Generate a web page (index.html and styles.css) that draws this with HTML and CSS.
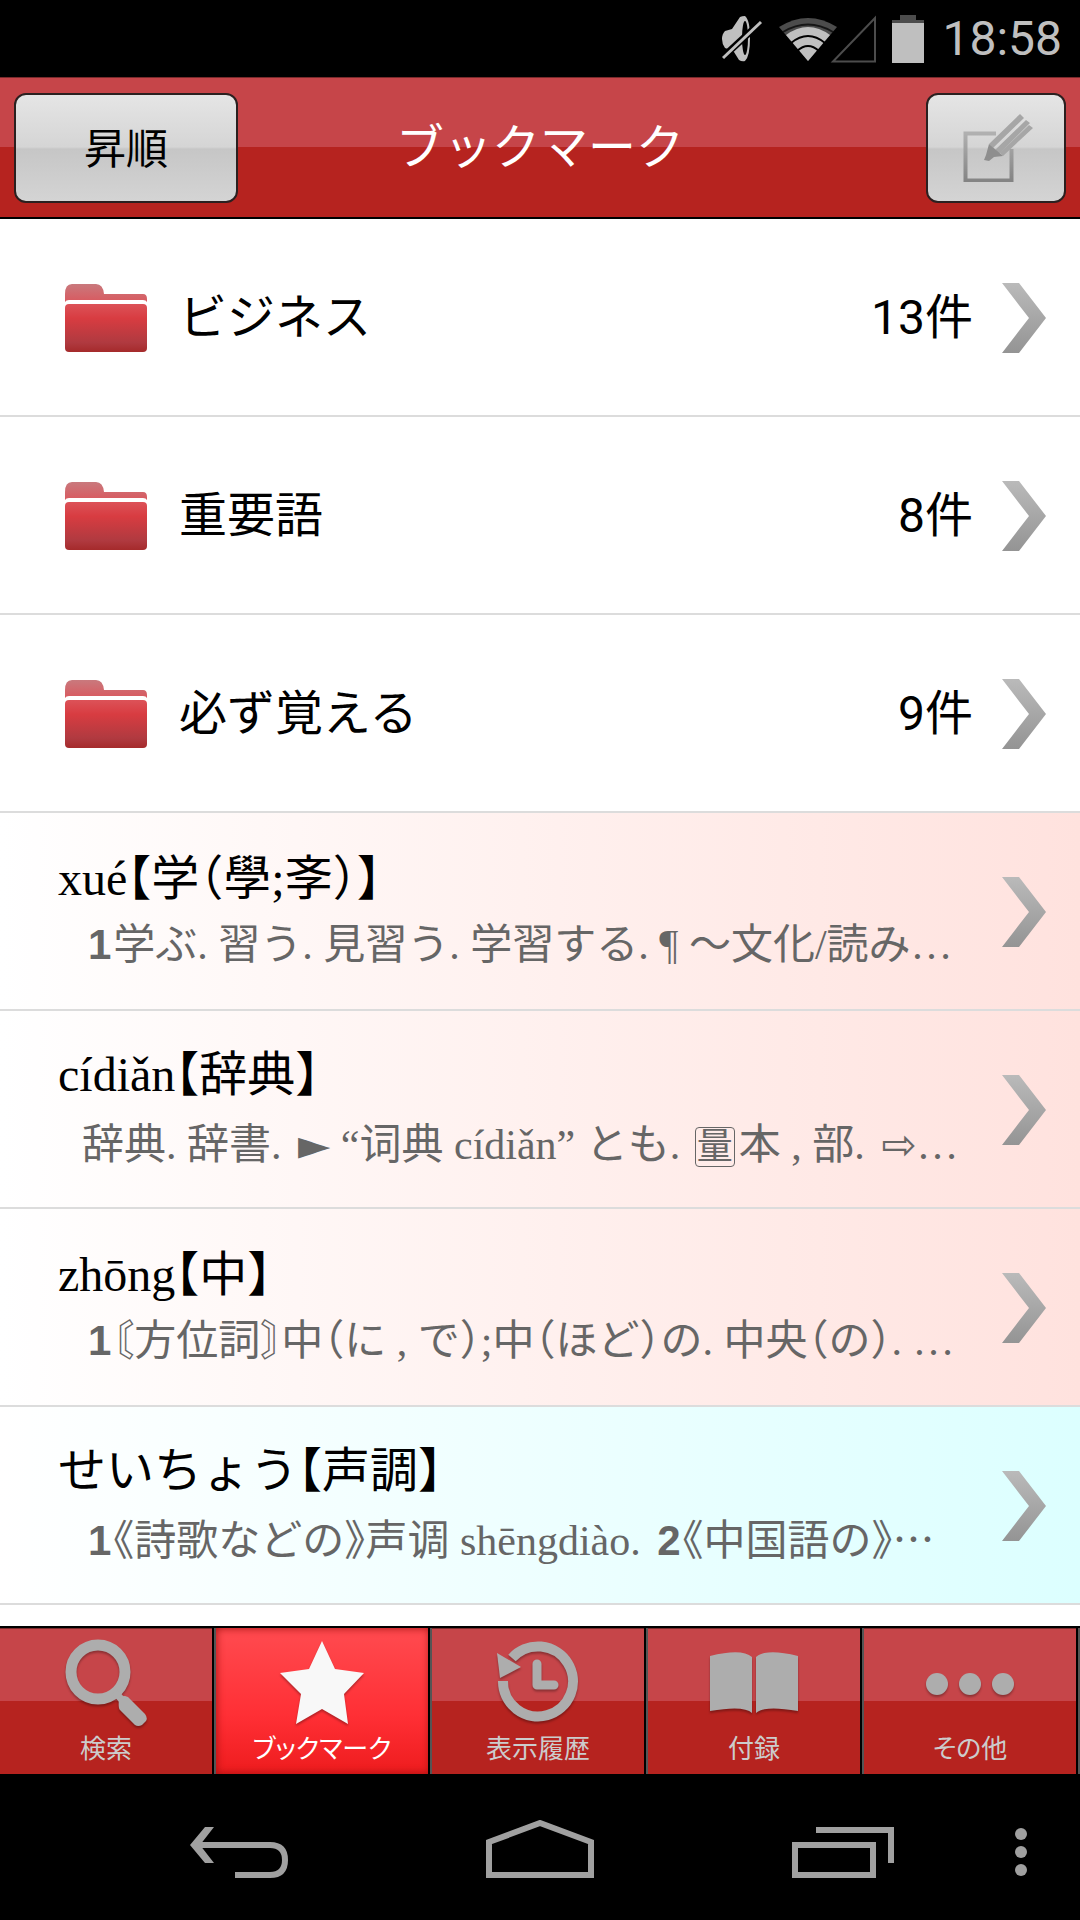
FILE: index.html
```html
<!DOCTYPE html>
<html lang="ja">
<head>
    <meta charset="UTF-8">
    <meta name="viewport" content="width=device-width, initial-scale=1.0">
    <title>ブックマーク</title>
    <link rel="stylesheet" href="styles.css">
</head>
<body>
    <!-- shared icons -->
    <svg class="defs" width="0" height="0" aria-hidden="true">
        <defs>
            <linearGradient id="arrowFill" x1="0" y1="0" x2="0" y2="1">
                <stop offset="0" stop-color="#bababa"/>
                <stop offset="1" stop-color="#949494"/>
            </linearGradient>
            <linearGradient id="folderBack" x1="0" y1="0" x2="0" y2="1">
                <stop offset="0" stop-color="#c9797d"/>
                <stop offset="1" stop-color="#d9595f"/>
            </linearGradient>
            <linearGradient id="folderFront" x1="0" y1="0" x2="0" y2="1">
                <stop offset="0" stop-color="#dc5258"/>
                <stop offset="0.3" stop-color="#d83c41"/>
                <stop offset="0.8" stop-color="#b03a40"/>
                <stop offset="1" stop-color="#a52a2b"/>
            </linearGradient>
            <linearGradient id="editFill" x1="0" y1="0" x2="0" y2="1">
                <stop offset="0" stop-color="#b0b0b0"/>
                <stop offset="1" stop-color="#848484"/>
            </linearGradient>
        </defs>
        <symbol id="arrow" viewBox="0 0 44 70">
            <path d="M0 0h17l27 35-27 35H0l27-35z" fill="url(#arrowFill)"/>
        </symbol>
        <symbol id="folder" viewBox="0 0 82 68">
            <path d="M0 18V10Q0 0 7 0h24q7 0 8 10h39q4 0 4 5v3q-1-2-4-2H4q-3 0-4 2z" fill="url(#folderBack)"/>
            <rect y="20" width="82" height="48" rx="4" fill="url(#folderFront)"/>
        </symbol>
    </svg>

    <div class="statusbar">
        <svg width="42" height="46" viewBox="0 0 42 46">
            <path d="M18 1q2-1 5-1 5 4 5 22t-5 23q-3 1-6-1l-5-8q-5-3-9-4-3-4-3-9t3-8l7-2z" fill="#bfbfbf"/>
            <ellipse cx="23" cy="22" rx="3" ry="17" fill="#000"/>
            <path d="M1 41L39 6" stroke="#000" stroke-width="7"/>
            <path d="M1 42L39 6" stroke="#bfbfbf" stroke-width="3"/>
        </svg>
        <svg width="98" height="48" viewBox="0 0 98 48">
            <path d="M29 46L0 12Q29-6 58 12z" fill="#4c4c4c"/>
            <path d="M29 46L7 20Q29 4 51 20z" fill="#bfbfbf"/>
            <path d="M12 28Q29 14 46 28M18 36Q29 26 40 36" fill="none" stroke="#000" stroke-width="2"/>
            <path d="M4 17Q29 2 54 17" fill="none" stroke="#000" stroke-width="2" opacity="0.7"/>
            <path d="M54 46.500H96V3z" fill="none" stroke="#4c4c4c" stroke-width="2"/>
        </svg>
        <svg width="32" height="48" viewBox="0 0 32 48">
            <path d="M0 10V5h8V0h16v5h8v5z" fill="#4c4c4c"/>
            <path d="M0 8h32v40H0z" fill="#bfbfbf"/>
        </svg>
        <span class="clock">18:58</span>
    </div>

    <header class="header">
        <button type="button" class="btn btn-sort">昇順</button>
        <h1>ブックマーク</h1>
        <button type="button" class="btn btn-edit" aria-label="編集">
            <svg width="74" height="68" viewBox="-4 0 74 68">
                <path d="M33 19.500H2.500V66.500H48.500V35" fill="none" stroke="url(#editFill)" stroke-width="4"/>
                <path d="M57 0l4 4-31 30-4-4zM63 6l4 3-31 31-4-4zM66 11l4 3-30 28-3-3z" fill="#a6a6a6"/>
                <path d="M26 30l14 12-9 1-5 4-5-1 2-5z" fill="#8e8e8e"/>
            </svg>
        </button>
    </header>

    <ul class="list">
        <li>
            <a href="#" class="row folder">
                <svg class="folder-icon"><use href="#folder"/></svg>
                <span class="folder-name">ビジネス</span>
                <span class="count">13件</span>
                <svg class="arrow"><use href="#arrow"/></svg>
            </a>
        </li>
        <li>
            <a href="#" class="row folder">
                <svg class="folder-icon"><use href="#folder"/></svg>
                <span class="folder-name">重要語</span>
                <span class="count">8件</span>
                <svg class="arrow"><use href="#arrow"/></svg>
            </a>
        </li>
        <li>
            <a href="#" class="row folder">
                <svg class="folder-icon"><use href="#folder"/></svg>
                <span class="folder-name">必ず覚える</span>
                <span class="count">9件</span>
                <svg class="arrow"><use href="#arrow"/></svg>
            </a>
        </li>
        <li>
            <a href="#" class="row word zh">
                <span class="entry">
                    <span class="headword">xué【学（學;斈）】</span>
                    <span class="meaning"><b>1</b>学ぶ. 習う. 見習う. 学習する. ¶ ～文化/読み…</span>
                </span>
                <svg class="arrow"><use href="#arrow"/></svg>
            </a>
        </li>
        <li>
            <a href="#" class="row word zh">
                <span class="entry">
                    <span class="headword">cídiǎn【辞典】</span>
                    <span class="meaning">辞典. 辞書. <span class="sym">►</span> “<span lang="zh-CN">词典</span> cídiǎn” とも. <span class="boxed">量</span>本 , 部. <span class="sym">⇨</span>…</span>
                </span>
                <svg class="arrow"><use href="#arrow"/></svg>
            </a>
        </li>
        <li>
            <a href="#" class="row word zh">
                <span class="entry">
                    <span class="headword">zhōng【中】</span>
                    <span class="meaning"><b>1</b>〘方位詞〙中（に , で）;中（ほど）の. 中央（の）. …</span>
                </span>
                <svg class="arrow"><use href="#arrow"/></svg>
            </a>
        </li>
        <li>
            <a href="#" class="row word ja">
                <span class="entry">
                    <span class="headword">せいちょう【声調】</span>
                    <span class="meaning"><b>1</b>《詩歌などの》<span lang="zh-CN">声调</span> shēngdiào. <b>2</b>《中国語の》<span class="mid">…</span></span>
                </span>
                <svg class="arrow"><use href="#arrow"/></svg>
            </a>
        </li>
    </ul>

    <nav class="tabs">
        <a href="#" class="tab">
            <svg viewBox="0 0 88 88">
                <circle cx="36" cy="34" r="27" fill="none" stroke="#adadad" stroke-width="11"/>
                <path d="M53 54l7 8" stroke="#adadad" stroke-width="7"/>
                <path d="M57 61q0-3 6-3l3 1 17 17q3 4 1 7l-4 4q-4 2-7 0L58 72q-2-2-1-11z" fill="#adadad"/>
            </svg>
            検索
        </a>
        <a href="#" class="tab active">
            <svg viewBox="0 0 88 88">
                <path d="M44 3l13 28 29 4-20 21 4 30-26-15-26 15 5-30L2 35l29-4z" fill="#f8f8f8"/>
            </svg>
            ブックマーク
        </a>
        <a href="#" class="tab">
            <svg viewBox="0 0 88 88">
                <path d="M18 20A35 35 0 1 1 9 43" fill="none" stroke="#adadad" stroke-width="10"/>
                <path d="M3 15l24 14L6 40z" fill="#adadad"/>
                <path d="M43 26v21h17" fill="none" stroke="#adadad" stroke-width="9" stroke-linecap="round" stroke-linejoin="round"/>
            </svg>
            表示履歴
        </a>
        <a href="#" class="tab">
            <svg viewBox="0 0 88 88">
                <path d="M0 18q32-8 42 1v56q-8-8-42-2zM88 18q-32-8-42 1v56q8-8 42-2z" fill="#adadad"/>
            </svg>
            付録
        </a>
        <a href="#" class="tab">
            <svg viewBox="0 0 88 88">
                <g fill="#adadad">
                    <circle cx="11" cy="46" r="11"/>
                    <circle cx="44" cy="46" r="11"/>
                    <circle cx="77" cy="46" r="11"/>
                </g>
            </svg>
            その他
        </a>
    </nav>

    <div class="navbar">
        <button type="button" aria-label="戻る">
            <svg width="100" height="58" viewBox="0 0 100 58">
                <path d="M6 25H80Q95 25 95 40T80 55H45" fill="none" stroke="#a0a0a0" stroke-width="6"/>
                <path d="M0 25L15 7h9L10 25l14 18h-9z" fill="#a0a0a0"/>
            </svg>
        </button>
        <button type="button" aria-label="ホーム">
            <svg width="108" height="58" viewBox="0 0 108 58">
                <path d="M3 22L54 3l51 19v33H3z" fill="none" stroke="#a0a0a0" stroke-width="6"/>
            </svg>
        </button>
        <button type="button" aria-label="最近使ったアプリ">
            <svg width="108" height="58" viewBox="-6 0 108 58">
                <path d="M3 25h78v30H3zM24 10h75v33" fill="none" stroke="#a0a0a0" stroke-width="6"/>
            </svg>
        </button>
        <button type="button" aria-label="メニュー">
            <svg width="14" height="58" viewBox="0 0 14 58">
                <g fill="#a0a0a0">
                    <circle cx="7" cy="14" r="6"/>
                    <circle cx="7" cy="32" r="6"/>
                    <circle cx="7" cy="50" r="6"/>
                </g>
            </svg>
        </button>
    </div>
</body>
</html>
```
FILE: styles.css
```css
* {
    box-sizing: border-box;
}
body {
    margin: 0;
    height: 100vh;
    display: flex;
    flex-direction: column;
    background-color: #000;
    font-family: Roboto, "Noto Sans CJK JP", sans-serif;
}
a {
    color: inherit;
    text-decoration: none;
}
.defs {
    position: absolute;
}

/* status bar */
.statusbar {
    display: flex;
    justify-content: flex-end;
    align-items: center;
    height: 77px;
    padding: 0 18px;
    color: #bfbfbf;
}
.statusbar svg + svg {
    margin-left: 15px;
}
.clock {
    margin-left: 18px;
    font-size: 48px;
    line-height: 77px;
}

/* header */
.header {
    display: grid;
    grid-template-columns: 1fr auto 1fr;
    align-items: center;
    height: 142px;
    padding: 0 14px;
    border-top: 1px solid #7a2a2c;
    border-bottom: 2px solid #000;
    background: linear-gradient(#c64549 50%, #b6231f 50%);
}
.header h1 {
    margin: 0;
    color: #fff;
    font-size: 48px;
    font-weight: 400;
    line-height: 66px;
}
.btn {
    display: flex;
    justify-content: center;
    align-items: center;
    height: 110px;
    padding: 0 0 4px;
    border: 2px solid #2b2020;
    border-radius: 12px;
    background: linear-gradient(#e5e5e5, #d5d5d5 49%, #c6c6c6 51%, #d4d4d4);
    color: #000;
    font-family: inherit;
    font-size: 42px;
}
.btn-sort {
    width: 224px;
}
.btn-edit {
    justify-self: end;
    width: 140px;
    padding: 0;
}

/* list */
.list {
    flex: 1;
    min-height: 0;
    margin: 0;
    padding: 0;
    overflow: hidden;
    list-style: none;
    background-color: #fff;
}
.row {
    display: flex;
    align-items: center;
    height: 198px;
    padding-top: 2px;
    padding-right: 34px;
    border-bottom: 2px solid #dcdcdc;
    color: #000;
    font-size: 48px;
    line-height: 66px;
}
.arrow {
    flex: none;
    width: 44px;
    height: 70px;
}
.folder {
    padding-left: 65px;
}
.folder-icon {
    width: 82px;
    height: 68px;
}
.folder-name {
    flex: 1;
    margin-left: 32px;
}
.count {
    margin-right: 29px;
}
.word {
    padding-left: 58px;
    font-family: "Liberation Serif", "Noto Sans CJK JP", serif;
    font-feature-settings: "halt";
}
.zh {
    background: linear-gradient(to right, #fff, #ffe2de);
}
.ja {
    background: linear-gradient(to right, #fff, #dcffff);
}
.entry {
    flex: 1;
    min-width: 0;
    white-space: nowrap;
}
.headword,
.meaning {
    display: block;
}
.meaning {
    padding-left: 24px;
    color: #666;
    font-size: 42px;
}
.meaning b {
    margin: 0 2px 0 6px;
    font-family: "Liberation Sans", sans-serif;
}
.meaning [lang="zh-CN"] {
    font-family: "Noto Sans CJK SC", sans-serif;
}
.sym {
    margin-left: 6px;
    font-family: "DejaVu Sans", sans-serif;
}
.mid {
    font-family: "Noto Sans CJK JP", sans-serif;
}
.boxed {
    display: inline-block;
    width: 40px;
    height: 40px;
    margin: 0 4px;
    border: 1px solid #666;
    border-radius: 4px;
    font-size: 36px;
    line-height: 38px;
    text-align: center;
}

/* tabs */
.tabs {
    display: grid;
    grid-template-columns: repeat(5, 1fr);
    height: 150px;
    border-top: 2px solid #000;
    border-bottom: 2px solid #000;
}
.tab {
    display: flex;
    flex-direction: column;
    align-items: center;
    padding: 10px 2px 0 0;
    border-right: 2px solid #555;
    background: linear-gradient(#c64549 50%, #b6231f 50%);
    box-shadow: inset -2px 0 #000, inset 0 1px #7a2a2c;
    color: #ccc;
    font-size: 26px;
    font-feature-settings: "palt";
    line-height: 30px;
}
.tab svg {
    width: 88px;
    height: 88px;
    margin-bottom: 8px;
    filter: drop-shadow(0 2px 1px rgba(0, 0, 0, 0.3));
}
.tab.active {
    background: linear-gradient(#ff4b50, #ff2f35 60%, #ee1c1e);
    box-shadow: inset -2px 0 #000, inset 0 0 8px #a01010;
    color: #fff;
}

/* system navigation */
.navbar {
    display: grid;
    grid-template-columns: 1fr 1fr 1fr 62px;
    height: 144px;
    padding: 2px 28px 0 90px;
}
.navbar button {
    display: flex;
    justify-content: center;
    align-items: center;
    padding: 0;
    border: 0;
    background: none;
}
```
